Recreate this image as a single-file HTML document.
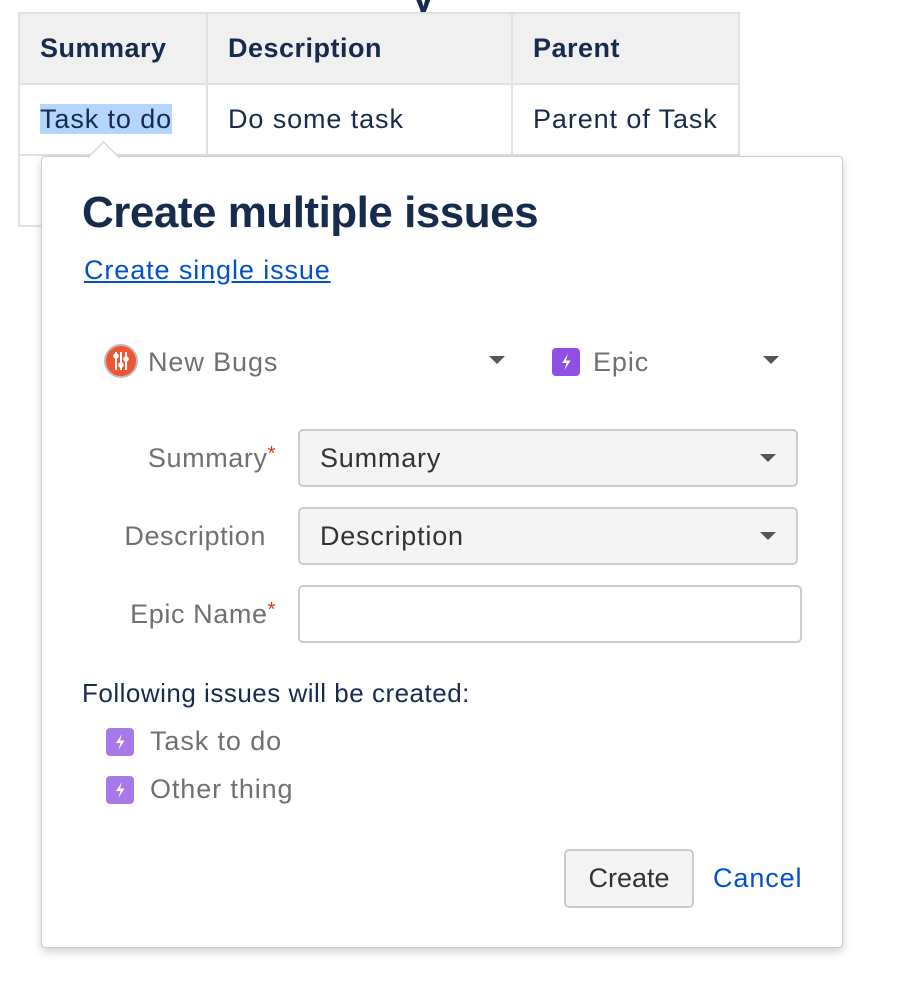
<!DOCTYPE html>
<html><head><style>
body{margin:0;width:906px;height:988px;background:#fff;font-family:"Liberation Sans",Arial,sans-serif;position:relative;overflow:hidden;color:#172b4d}
.abs{position:absolute}
.t{font-size:27px;letter-spacing:0.9px}
table{position:absolute;left:18px;top:12px;border-collapse:collapse;font-size:27px;letter-spacing:0.9px}
td,th{border:2px solid #dfe1e6;text-align:left;padding:0 20px;height:69px;white-space:nowrap}
th{background:#f0f0f0;font-weight:bold;color:#172b4d;letter-spacing:0.5px}
.pop{left:41px;top:156px;width:800px;height:790px;background:#fff;border:1px solid #ccc;border-radius:4px;box-shadow:0 4px 10px rgba(0,0,0,.18)}
.lbl{color:#707070;font-size:27px;letter-spacing:0.6px;text-align:right;width:190px}
.sel{background:#f4f4f4;border:2px solid #ccc;border-radius:5px;height:58px;box-sizing:border-box;font-size:27px;letter-spacing:0.8px;color:#333;padding:12px 20px}
.tri{width:0;height:0;border-left:8px solid transparent;border-right:8px solid transparent;border-top:8px solid #555;position:absolute}
.req{color:#de350b;font-size:20px;vertical-align:top}
.ep{width:28px;height:28px;border-radius:4px;background:#a778e9;position:absolute}
</style></head><body>
<div class="abs" style="left:412px;top:-24px;font-size:40px;font-weight:bold">y</div>
<table>
<tr><th style="width:146px">Summary</th><th style="width:263px">Description</th><th style="width:184px">Parent</th></tr>
<tr><td><span style="background:#b4d5fe">Task to do</span></td><td>Do some task</td><td>Parent of Task</td></tr>
<tr><td></td><td></td><td></td></tr>
</table>
<div class="abs pop"></div>
<div class="abs" style="left:92px;top:146px;width:22px;height:22px;background:#fff;border-left:1px solid #ccc;border-top:1px solid #ccc;transform:rotate(45deg)"></div>
<div class="abs" style="left:82px;top:188px;font-size:44px;font-weight:bold;color:#172b4d;letter-spacing:-0.5px">Create multiple issues</div>
<div class="abs t" style="left:84px;top:255px;color:#0052cc;text-decoration:underline">Create single issue</div>

<div class="abs" style="left:104px;top:344px;width:34px;height:34px;border-radius:50%;background:#ee5533;border:2px solid #bbb;box-sizing:border-box">
<svg width="30" height="30" viewBox="0 0 30 30"><g stroke="#fff" stroke-width="2"><line x1="10" y1="6" x2="10" y2="24"/><line x1="15" y1="6" x2="15" y2="24"/><line x1="20" y1="6" x2="20" y2="24"/></g><circle cx="10" cy="10" r="2.8" fill="#fff"/><circle cx="15" cy="19" r="2.8" fill="#fff"/><circle cx="20" cy="13" r="2.8" fill="#fff"/></svg></div>
<div class="abs t" style="left:148px;top:347px;color:#707070">New Bugs</div>
<div class="tri" style="left:489px;top:356px"></div>
<div class="abs" style="left:552px;top:348px;width:28px;height:28px;border-radius:4px;background:#904ee2"><svg width="28" height="28"><path d="M16 6l-6 9h4.5l-2 7 6-9.5h-4.5z" fill="#fff"/></svg></div>
<div class="abs t" style="left:593px;top:347px;color:#707070">Epic</div>
<div class="tri" style="left:763px;top:356px"></div>

<div class="abs lbl" style="left:86px;top:443px">Summary<span class="req">*</span></div>
<div class="abs sel" style="left:298px;top:429px;width:500px">Summary</div>
<div class="tri" style="left:760px;top:454px"></div>
<div class="abs lbl" style="left:76px;top:521px">Description</div>
<div class="abs sel" style="left:298px;top:507px;width:500px">Description</div>
<div class="tri" style="left:760px;top:532px"></div>
<div class="abs lbl" style="left:86px;top:599px">Epic Name<span class="req">*</span></div>
<div class="abs" style="left:298px;top:585px;width:504px;height:58px;border:2px solid #ccc;border-radius:5px;box-sizing:border-box"></div>

<div class="abs" style="left:82px;top:678px;font-size:26px;letter-spacing:0.5px;color:#172b4d">Following issues will be created:</div>
<div class="ep" style="left:106px;top:728px"><svg width="28" height="28"><path d="M16 6l-6 9h4.5l-2 7 6-9.5h-4.5z" fill="#fff"/></svg></div>
<div class="abs t" style="left:150px;top:726px;color:#707070">Task to do</div>
<div class="ep" style="left:106px;top:776px"><svg width="28" height="28"><path d="M16 6l-6 9h4.5l-2 7 6-9.5h-4.5z" fill="#fff"/></svg></div>
<div class="abs t" style="left:150px;top:774px;color:#707070">Other thing</div>

<div class="abs" style="left:564px;top:849px;width:130px;height:59px;box-sizing:border-box;border:2px solid #ccc;border-radius:5px;background:#f4f4f4;font-size:27px;color:#333;text-align:center;line-height:55px">Create</div>
<div class="abs t" style="left:713px;top:863px;color:#0052cc">Cancel</div>
</body></html>
